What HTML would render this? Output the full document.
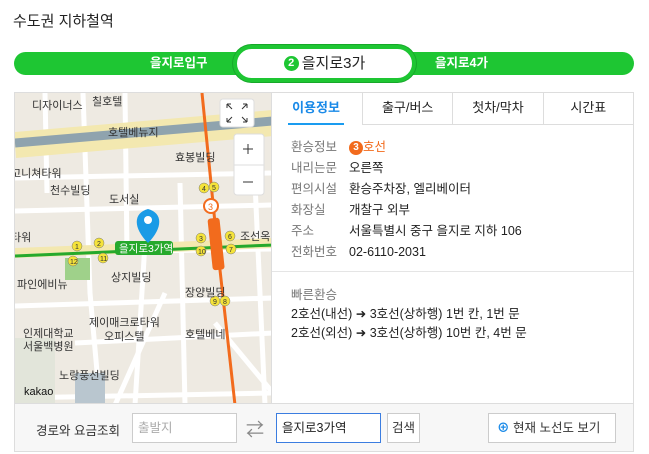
<!DOCTYPE html>
<html><head><meta charset="utf-8"><style>
*{margin:0;padding:0;box-sizing:border-box}
body{width:649px;height:454px;background:#fff;font-family:"Liberation Sans","Noto Sans CJK KR",sans-serif;position:relative;overflow:hidden;color:#222}
.abs{position:absolute}
.title{left:13px;top:10px;font-size:15px;color:#222}
.bar{left:14px;top:52px;width:620px;height:23px;background:#1ec633;border-radius:12px}
.bar span{position:absolute;top:0;line-height:22px;color:#fff;font-weight:bold;font-size:12.5px}
.pill{left:233px;top:45px;width:183px;height:37px;border:4px solid #1ec633;border-radius:19px;background:#fff;text-align:center;font-size:15px;line-height:29px;box-shadow:0 0 0 1px #17a82a}
.pill b{display:inline-block;width:15px;height:15px;border-radius:50%;background:#1ec633;color:#fff;font-size:11px;line-height:15px;vertical-align:2px;margin-right:3px}
.map{left:14px;top:92px;width:258px;height:312px;overflow:hidden;border:1px solid #ddd;background:#eeeae2}
.panel{left:272px;top:92px;width:362px;height:312px;border:1px solid #ddd;border-left:none}
.tabs{display:flex;height:32px}
.tabs div{flex:1;text-align:center;font-size:13px;line-height:30px;border-left:1px solid #ddd;border-bottom:1px solid #ddd;color:#222}
.tabs div.on{border-left:none;border-bottom:2px solid #1a9cf0;color:#1a8ae8;font-weight:bold;margin:0 18px 0 16px;flex:0 0 56px}
.rows{padding:12px 0 0 19px;font-size:12.5px}
.row{height:21px;line-height:21px}
.row i{font-style:normal;color:#777;display:inline-block;width:58px}
.sep{border-top:1px solid #e5e5e5;margin-top:8px}
.fast{padding:14px 0 0 19px;font-size:12.5px;line-height:19px}
.bot{left:14px;top:404px;width:620px;height:48px;background:#f7f7f7;border:1px solid #ddd;border-top:none}
.in{position:absolute;top:9px;height:30px;border:1px solid #ccc;background:#fff;font-size:12.5px;line-height:28px;padding-left:5px;white-space:nowrap}
</style></head><body>
<div class="abs title">수도권 지하철역</div>
<div class="abs bar"><span style="left:136px">을지로입구</span><span style="left:421px">을지로4가</span></div>
<div class="abs pill"><b>2</b>을지로3가</div>

<div class="abs map">
<svg width="258" height="312" viewBox="0 0 258 312" font-family="Liberation Sans,Noto Sans CJK KR,sans-serif" font-size="11" fill="#333">
<g stroke="#fff" stroke-width="5" fill="none">
<path d="M0 85 L258 80"/><path d="M0 118 L258 112"/><path d="M0 160 L258 156"/><path d="M0 213 L258 205"/>
<path d="M68 0 L75 200 L85 312"/><path d="M30 0 L32 100"/><path d="M110 0 L112 160"/><path d="M130 150 L120 312"/>
<path d="M165 90 L170 312"/><path d="M240 90 L250 312"/><path d="M60 250 L258 240"/><path d="M0 305 L258 300"/>
<path d="M150 200 L100 312"/><path d="M200 230 L258 300"/>
</g>
<path d="M0 52 L258 30" stroke="#f3e8b0" stroke-width="26"/>
<path d="M0 50 L258 28" stroke="#8fa3ae" stroke-width="9"/>
<rect x="0" y="245" width="40" height="67" fill="#e2e5da"/>
<rect x="60" y="280" width="30" height="32" fill="#b9c6cf"/>
<rect x="50" y="165" width="25" height="22" fill="#9fd18a"/>
<path d="M0 160 L258 150" stroke="#f3e8b0" stroke-width="10"/>
<path d="M187 0 L202 150 L220 312" stroke="#f26b1d" stroke-width="3" fill="none"/>
<path d="M0 163 L258 152" stroke="#26a92c" stroke-width="3"/>
<rect x="195" y="125" width="12" height="52" rx="3" fill="#f26b1d" transform="rotate(-6 201 150)"/>
<circle cx="196" cy="113" r="7" fill="#fff" stroke="#f26b1d" stroke-width="2"/><text x="193" y="117" font-size="9" fill="#f26b1d">3</text>
<rect x="100" y="148" width="58" height="14" rx="3" fill="#26a92c"/><text x="104" y="159" fill="#fff" font-size="10.5">을지로3가역</text>
<path d="M133 150 C118 135 118 120 133 116 C148 120 148 135 133 150Z" fill="#1a9be6"/><circle cx="133" cy="127" r="4" fill="#fff"/>
<g font-size="7" fill="#333">
<circle cx="62" cy="153" r="5" fill="#f5e33a" stroke="#777" stroke-width=".5"/><text x="60" y="156">1</text>
<circle cx="84" cy="150" r="5" fill="#f5e33a" stroke="#777" stroke-width=".5"/><text x="82" y="153">2</text>
<circle cx="58" cy="168" r="5" fill="#f5e33a" stroke="#777" stroke-width=".5"/><text x="55" y="171">12</text>
<circle cx="88" cy="165" r="5" fill="#f5e33a" stroke="#777" stroke-width=".5"/><text x="85" y="168">11</text>
<circle cx="186" cy="145" r="5" fill="#f5e33a" stroke="#777" stroke-width=".5"/><text x="184" y="148">3</text>
<circle cx="186" cy="158" r="5" fill="#f5e33a" stroke="#777" stroke-width=".5"/><text x="183" y="161">10</text>
<circle cx="215" cy="143" r="5" fill="#f5e33a" stroke="#777" stroke-width=".5"/><text x="213" y="146">6</text>
<circle cx="216" cy="156" r="5" fill="#f5e33a" stroke="#777" stroke-width=".5"/><text x="214" y="159">7</text>
<circle cx="189" cy="95" r="5" fill="#f5e33a" stroke="#777" stroke-width=".5"/><text x="187" y="98">4</text>
<circle cx="199" cy="94" r="5" fill="#f5e33a" stroke="#777" stroke-width=".5"/><text x="197" y="97">5</text>
<circle cx="200" cy="208" r="5" fill="#f5e33a" stroke="#777" stroke-width=".5"/><text x="198" y="211">9</text>
<circle cx="210" cy="208" r="5" fill="#f5e33a" stroke="#777" stroke-width=".5"/><text x="208" y="211">8</text>
</g>
<text x="17" y="16">디자이너스</text><text x="77" y="12">칠호텔</text><text x="93" y="43">호텔베뉴지</text>
<text x="160" y="68">효봉빌딩</text><text x="-4" y="84">고니쳐타워</text><text x="35" y="101">천수빌딩</text>
<text x="94" y="110">도서실</text><text x="-4" y="148">타워</text><text x="225" y="147">조선옥</text>
<text x="96" y="188">상지빌딩</text><text x="2" y="195">파인에비뉴</text><text x="170" y="203">장양빌딩</text>
<text x="74" y="233">제이매크로타워</text><text x="89" y="247">오피스텔</text><text x="170" y="245">호텔베네</text>
<text x="8" y="244">인제대학교</text><text x="8" y="257">서울백병원</text><text x="44" y="286">노랑풍선빌딩</text>
<text x="9" y="302" font-size="11" fill="#111">kakao</text>
<rect x="205" y="6" width="34" height="28" rx="3" fill="#fff" stroke="#ddd"/>
<path d="M212 11l5 5M212 11h4M212 11v4M232 11l-5 5M232 11h-4M232 11v4M212 29l5-5M212 29h4M212 29v-4M232 29l-5-5M232 29h-4M232 29v-4" stroke="#333" fill="none"/>
<rect x="219" y="41" width="30" height="61" rx="3" fill="#fff" stroke="#ddd"/><path d="M219 72h30" stroke="#ddd"/>
<path d="M228 56h10M233 51v10M228 89h10" stroke="#333"/>
</svg>
</div>

<div class="abs panel">
<div class="tabs"><div class="on">이용정보</div><div>출구/버스</div><div>첫차/막차</div><div>시간표</div></div>
<div class="rows">
<div class="row"><i>환승정보</i><span style="display:inline-block;width:14px;height:14px;border-radius:50%;background:#f26b1d;color:#fff;font-size:10px;font-weight:bold;text-align:center;line-height:14px;vertical-align:1px">3</span><span style="color:#f26b1d">호선</span></div>
<div class="row"><i>내리는문</i>오른쪽</div>
<div class="row"><i>편의시설</i>환승주차장, 엘리베이터</div>
<div class="row"><i>화장실</i>개찰구 외부</div>
<div class="row"><i>주소</i>서울특별시 중구 을지로 지하 106</div>
<div class="row"><i>전화번호</i>02-6110-2031</div>
</div>
<div class="sep"></div>
<div class="fast"><div style="color:#777">빠른환승</div>
<div>2호선(내선) ➜ 3호선(상하행) 1번 칸, 1번 문</div>
<div>2호선(외선) ➜ 3호선(상하행) 10번 칸, 4번 문</div></div>
</div>

<div class="abs bot">
<span class="abs" style="left:21px;top:16px;font-size:12.5px;color:#333;white-space:nowrap">경로와 요금조회</span>
<div class="in" style="left:117px;width:105px;color:#aaa">출발지</div>
<span class="abs" style="left:231px;top:12px;font-size:18px;color:#888">⇄</span>
<div class="in" style="left:261px;width:105px;border-color:#3b7de0">을지로3가역</div>
<div class="in" style="left:372px;width:33px;padding-left:4px;color:#333">검색</div>
<div class="in" style="left:473px;width:128px;color:#333;padding-left:8px"><span style="color:#1a8ae8;font-weight:bold">⊕</span> 현재 노선도 보기</div>
</div>
</body></html>
